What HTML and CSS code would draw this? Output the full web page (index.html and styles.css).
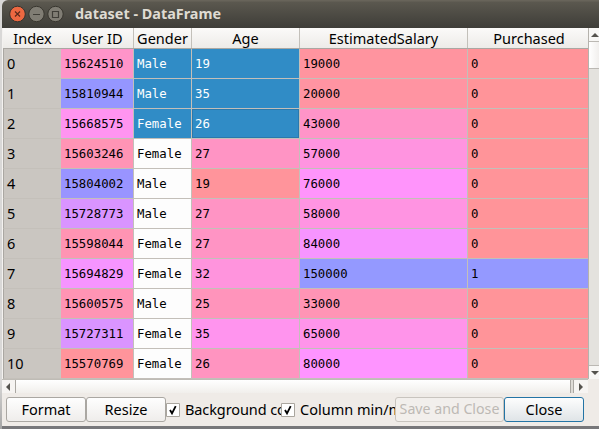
FILE: index.html
```
<!DOCTYPE html>
<html lang="en">
<head>
<meta charset="utf-8">
<title>dataset - DataFrame</title>
<link rel="stylesheet" href="styles.css">
</head>
<body>
<div class="window">
  <header class="titlebar">
    <svg class="controls" width="56" height="20" viewBox="0 0 56 20">
      <circle cx="9.5" cy="9" r="7.8" fill="#ed6841" stroke="#35332e"/>
      <path d="M7 6.5l5 5M12 6.5l-5 5" stroke="#5b291b" stroke-width="1.2"/>
      <circle cx="28.5" cy="9" r="7.7" fill="#807d74" stroke="#38362f"/>
      <path d="M25 9.5h7" stroke="#403e38" stroke-width="1.2"/>
      <circle cx="47.5" cy="9" r="7.7" fill="#807d74" stroke="#38362f"/>
      <path d="M44.5 6.5h6v6h-6z" fill="none" stroke="#403e38" stroke-width="1.2"/>
    </svg>
    <h1>dataset - DataFrame</h1>
  </header>
  <main class="view">
    <div class="table">
      <div class="row head"><b class="h-index">Index</b><b class="h-user">User ID</b><b class="h-gender">Gender</b><b class="h-age">Age</b><b class="h-salary">EstimatedSalary</b><b class="h-bought">Purchased</b></div>
      <div class="row"><i>0</i><span style="background:#ff94c9">15624510</span><span class="sel">Male</span><span class="sel">19</span><span style="background:#ff949f">19000</span><span>0</span></div>
      <div class="row"><i>1</i><span style="background:#9596ff">15810944</span><span class="sel">Male</span><span class="sel">35</span><span style="background:#ff94a2">20000</span><span>0</span></div>
      <div class="row"><i>2</i><span style="background:#ff94f0">15668575</span><span class="sel">Female</span><span class="sel current">26</span><span style="background:#ff94c8">43000</span><span>0</span></div>
      <div class="row"><i>3</i><span style="background:#ff94b5">15603246</span><span class="plain">Female</span><span style="background:#ff94c4">27</span><span style="background:#ff94e0">57000</span><span>0</span></div>
      <div class="row"><i>4</i><span style="background:#9994ff">15804002</span><span class="plain">Male</span><span style="background:#ff949b">19</span><span style="background:#ff94fb">76000</span><span>0</span></div>
      <div class="row"><i>5</i><span style="background:#d994ff">15728773</span><span class="plain">Male</span><span style="background:#ff94c4">27</span><span style="background:#ff94e2">58000</span><span>0</span></div>
      <div class="row"><i>6</i><span style="background:#ff94b3">15598044</span><span class="plain">Female</span><span style="background:#ff94c4">27</span><span style="background:#f794ff">84000</span><span>0</span></div>
      <div class="row"><i>7</i><span style="background:#f694ff">15694829</span><span class="plain">Female</span><span style="background:#ff94dd">32</span><span style="background:#9499ff">150000</span><span style="background:#9499ff">1</span></div>
      <div class="row"><i>8</i><span style="background:#ff94b4">15600575</span><span class="plain">Male</span><span style="background:#ff94bb">25</span><span style="background:#ff94b5">33000</span><span>0</span></div>
      <div class="row"><i>9</i><span style="background:#da94ff">15727311</span><span class="plain">Female</span><span style="background:#ff94ee">35</span><span style="background:#ff94ea">65000</span><span>0</span></div>
      <div class="row"><i>10</i><span style="background:#ff949b">15570769</span><span class="plain">Female</span><span style="background:#ff94c0">26</span><span style="background:#fe94ff">80000</span><span>0</span></div>
    </div>
    <div class="vscroll">
      <div class="step up"><svg width="8" height="4" viewBox="0 0 8 4"><path d="M0 4L4 0l4 4z" fill="#55534e"/></svg></div>
      <div class="thumb"></div>
      <div class="trough"></div>
      <div class="step down"><svg width="8" height="4" viewBox="0 0 8 4"><path d="M0 0l4 4 4-4z" fill="#55534e"/></svg></div>
    </div>
  </main>
  <div class="hscroll">
    <div class="hstep left"><svg width="4" height="8" viewBox="0 0 4 8"><path d="M4 0L0 4l4 4z" fill="#55534e"/></svg></div>
    <div class="hthumb"></div>
    <div class="gap"></div>
    <div class="hstep"><svg width="4" height="8" viewBox="0 0 4 8"><path d="M0 0l4 4-4 4z" fill="#55534e"/></svg></div>
  </div>
  <footer class="actions">
    <button class="format">Format</button>
    <button class="resize">Resize</button>
    <label class="bg"><svg class="box" width="14" height="14" viewBox="0 0 14 14"><path d="M.5.5h13v13H.5z" fill="#fff" stroke="#aaa69f"/><path d="M4 7l2 3.3L9.7 3.2" fill="none" stroke="#000" stroke-width="1.8"/></svg><span>Background color</span></label>
    <label class="minmax"><svg class="box" width="14" height="14" viewBox="0 0 14 14"><path d="M.5.5h13v13H.5z" fill="#fff" stroke="#aaa69f"/><path d="M4 7l2 3.3L9.7 3.2" fill="none" stroke="#000" stroke-width="1.8"/></svg><span>Column min/max</span></label>
    <button class="save" disabled>Save and Close</button>
    <button class="close">Close</button>
  </footer>
</div>
</body>
</html>
```
FILE: styles.css
```
* { box-sizing: border-box; }
body {
  margin: 0;
  height: 429px;
  overflow: hidden;
  padding-left: 2px;
  background: linear-gradient(#d9d8d7 0 380px, #a5a5a5 429px);
  font: 14.5px "Noto Sans", sans-serif;
  color: #000;
}
.window {
  height: 426px;
  background: #efebe7;
  border-radius: 6px 0 0 0;
  overflow: hidden;
  box-shadow: 0 3px 0 #77777a;
}
.titlebar {
  height: 28px;
  display: flex;
  align-items: center;
  padding: 2px 0 0 6px;
  background: linear-gradient(#68645a 0 1px, #5b584f 2px, #3e3d38);
}
.controls { display: block; }
h1 {
  margin: -2px 0 0 11px;
  font: bold 14.4px/20px "Noto Sans", sans-serif;
  color: #dfdbd2;
  white-space: nowrap;
}
.view { display: flex; height: 351px; }
.table {
  width: 587px;
  border-left: 1px solid #f4f2f0;
  border-right: 1px solid #b5b2ac;
}
.row {
  display: grid;
  grid-template-columns: 58px 73px 58px 108px 168px 120px;
  grid-template-rows: 100%;
  height: 30px;
}
.row.head {
  height: 21px;
  background: linear-gradient(#fbfaf9, #edebe8);
  border-bottom: 1px solid #aaa7a2;
}
.head b {
  font-weight: normal;
  line-height: 21px;
  text-align: center;
  border-right: 1px solid #c3c0ba;
  white-space: nowrap;
}
.head .h-index, .head .h-user, .head .h-bought { border-right: 0; }
.head .h-user { border-right: 1px solid #c3c0ba; }
.head .h-index { padding-left: 1px; }
.h-bought { padding-left: 2px; }
.row i {
  font-style: normal;
  line-height: 28px;
  padding-left: 3px;
  background: #cac6c1;
  border-left: 1px solid #aaa7a2;
  border-bottom: 1px solid #c4c0ba;
}
.row span {
  background: #ff9499;
  border-right: 1px solid #c3bfb9;
  border-bottom: 1px solid #c3bfb9;
  padding-left: 3px;
  font: 12.35px/30px "DejaVu Sans Mono", monospace;
}
.row span:last-child { border-right: 0; }
.row .sel { background: #308cc6; color: #fff; }
.row .current { box-shadow: inset 0 0 0 1px #2a79ad; }
.row .plain { background: #fdfdfd; }
.vscroll {
  flex: 1;
  display: flex;
  flex-direction: column;
  overflow: hidden;
}
.step {
  height: 14px;
  padding-left: 2px;
  display: flex;
  align-items: center;
  background: #f8f7f5;
}
.step svg { flex: none; }
.up { border-bottom: 1px solid #bbb8b3; }
.down { border-top: 1px solid #bbb8b3; }
.thumb {
  height: 27px;
  background: linear-gradient(90deg, #fff, #f1efed);
  border-bottom: 1px solid #bbb8b3;
}
.trough { flex: 1; background: #e4e2de; }
.hscroll {
  width: 586px;
  height: 14px;
  display: flex;
  border-top: 1px solid #bfbcb6;
}
.hstep {
  width: 14px;
  display: flex;
  align-items: center;
  padding-left: 5px;
  background: #f6f4f2;
}
.left { border-right: 1px solid #aaa7a2; padding-left: 4px; }
.hthumb { flex: 1; background: linear-gradient(#fff, #f1efec); }
.gap {
  width: 4px;
  background: #dedbd6;
  border: solid #aaa7a2;
  border-width: 0 1px;
}
.actions {
  display: flex;
  align-items: flex-start;
  padding: 4px 0 0 4px;
}
button {
  height: 25px;
  padding: 0 0 2px;
  font: 14.5px "Noto Sans", sans-serif;
  color: #000;
  border: 1px solid #aaa7a2;
  border-radius: 3px;
  background: linear-gradient(#fefefe, #efedeb);
  white-space: nowrap;
}
.format, .resize, .close { width: 80px; }
.save { width: 109px; font-size: 14.2px; color: #bdb9b4; border-color: #c8c4be; background: #f2efec; }
.close { border-color: #2374a5; background: linear-gradient(#fdfdfd, #dfe4e7); }
label {
  display: flex;
  align-items: center;
  height: 25px;
  overflow: hidden;
  white-space: nowrap;
}
label span { margin-top: -2px; overflow: hidden; }
.box { flex: none; margin-right: 5px; }
.bg { width: 115px; }
.bg span { letter-spacing: -.1px; }
.minmax { width: 114px; }
```
